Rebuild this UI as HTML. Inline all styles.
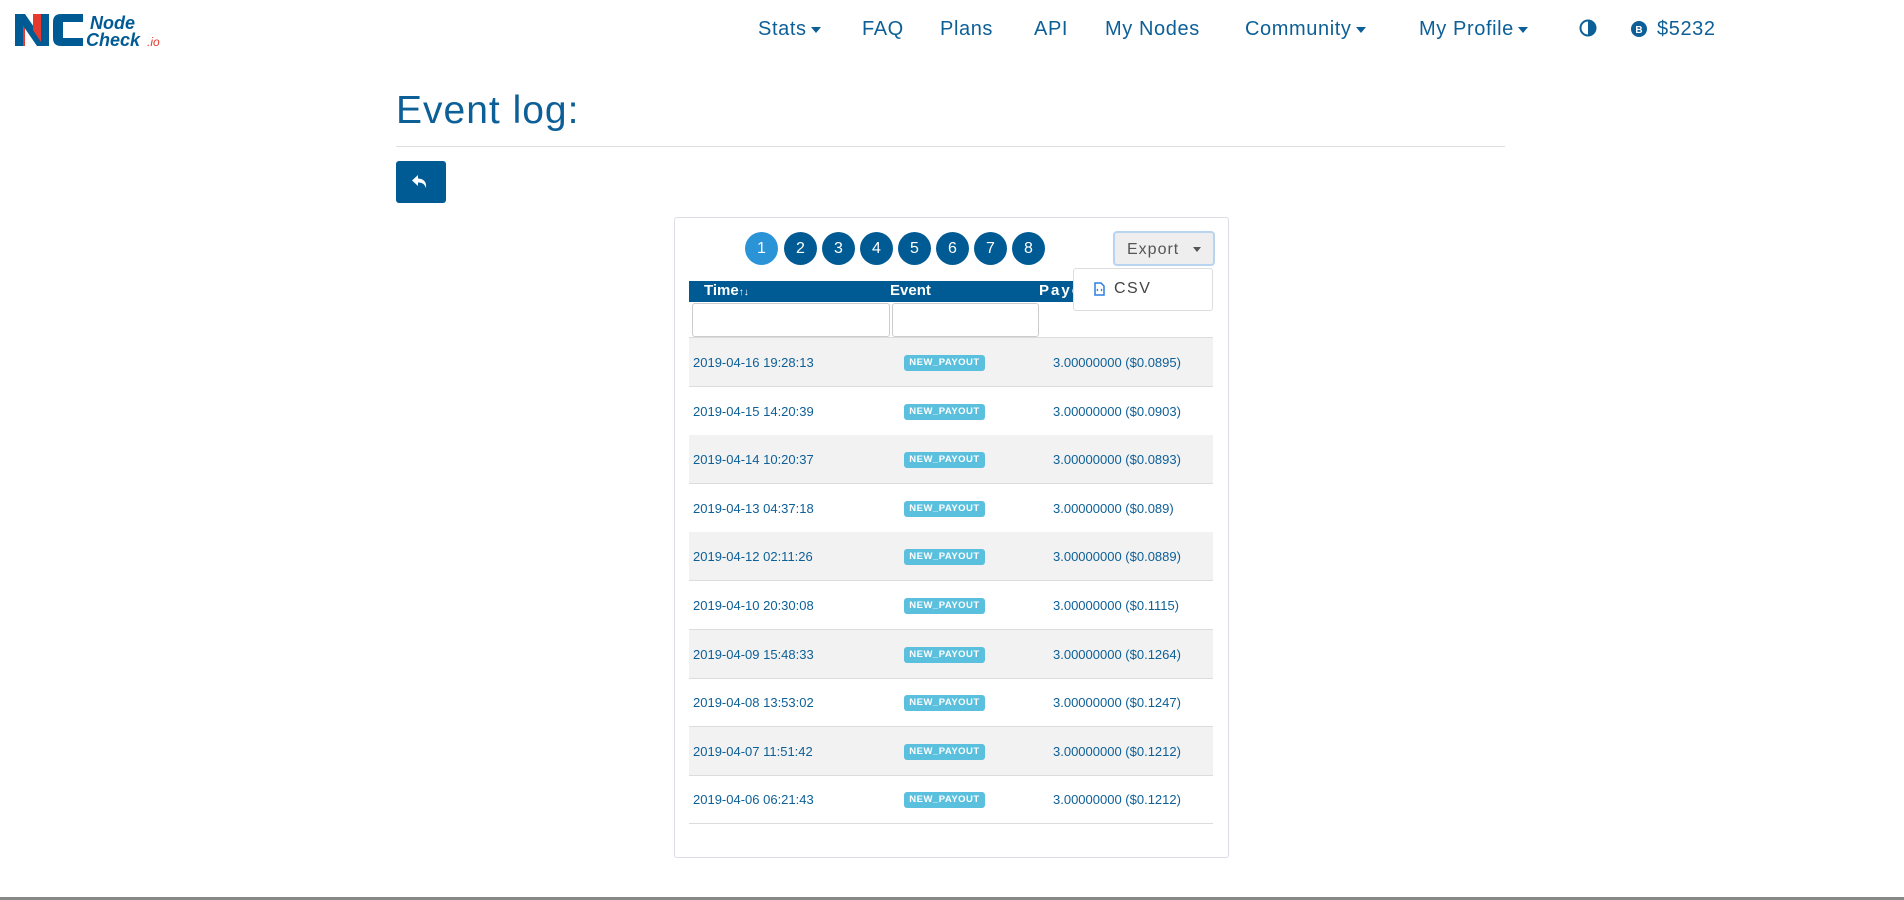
<!DOCTYPE html>
<html><head><meta charset="utf-8"><style>
*{box-sizing:border-box;margin:0;padding:0}
body{width:1904px;height:900px;background:#fff;font-family:"Liberation Sans",sans-serif;position:relative;overflow:hidden;color:#005b94}
.a{position:absolute;white-space:nowrap}
.nav{top:18px;font-size:20px;color:#0d5f97;letter-spacing:0.6px}
.car{display:inline-block;width:0;height:0;border-left:5px solid transparent;border-right:5px solid transparent;border-top:6px solid #0d5f97;vertical-align:middle;margin-left:4px}
.pg{top:232px;width:33px;height:33px;border-radius:50%;background:#005b94;color:#fff;font-size:16px;text-align:center;line-height:33px}
.row{left:689px;width:524px;height:49px;border-bottom:1px solid #dcdcdc;font-size:13px;color:#0d5f97}
.row span{position:absolute;top:17px}
.badge{position:absolute;left:215px;top:17px;width:81px;height:16px;background:#5bc0de;color:#fff;font-size:9.5px;font-weight:bold;border-radius:3px;text-align:center;line-height:16px;letter-spacing:.5px}
</style></head><body>
<svg class="a" style="left:13px;top:12px" width="154" height="36" viewBox="0 0 154 36">
<polygon points="2,2 12,2 12,34 2,34" fill="#e63a2e"/>
<polygon points="2,2 12,2 34,34 24,34" fill="#005b94"/>
<rect x="2" y="2" width="8" height="32" fill="#005b94"/>
<polygon points="20,2 28,2 28,30 20,18" fill="#e63a2e"/>
<path d="M70 2 H48 Q40 2 40 10 V26 Q40 34 48 34 H70 V26 H50 V10 H70 Z" fill="#005b94"/>
<path d="M28 2 H36 V34 H28 Z" fill="#005b94"/>
<text x="77" y="17" font-family="Liberation Sans" font-style="italic" font-weight="bold" font-size="18" fill="#005b94">Node</text>
<text x="73" y="34" font-family="Liberation Sans" font-style="italic" font-weight="bold" font-size="18" fill="#005b94">Check</text>
<text x="134" y="34" font-family="Liberation Sans" font-style="italic" font-size="12" fill="#e63a2e">.io</text>
</svg>
<div class="a nav" style="left:758px">Stats<span class="car"></span></div>
<div class="a nav" style="left:862px">FAQ</div>
<div class="a nav" style="left:940px">Plans</div>
<div class="a nav" style="left:1034px">API</div>
<div class="a nav" style="left:1105px">My Nodes</div>
<div class="a nav" style="left:1245px">Community<span class="car"></span></div>
<div class="a nav" style="left:1419px">My Profile<span class="car"></span></div>
<svg class="a" style="left:1579px;top:19px" width="18" height="18" viewBox="0 0 18 18"><circle cx="9" cy="9" r="7.5" fill="none" stroke="#0d5f97" stroke-width="2"/><path d="M9 1.5 A7.5 7.5 0 0 1 9 16.5Z" fill="#0d5f97"/></svg>
<svg class="a" style="left:1631px;top:21px" width="16" height="16" viewBox="0 0 16 16"><circle cx="8" cy="8" r="8" fill="#0d5f97"/><text x="8" y="12" text-anchor="middle" font-size="10" font-weight="bold" fill="#fff" font-family="Liberation Sans">B</text></svg>
<div class="a nav" style="left:1657px">$5232</div>

<div class="a" style="left:396px;top:89px;font-size:39px;color:#0d5f97;letter-spacing:1px">Event log:</div>
<div class="a" style="left:396px;top:146px;width:1109px;height:1px;background:#e0e0e0"></div>
<div class="a" style="left:396px;top:161px;width:50px;height:42px;background:#005b94;border-radius:3px">
<svg style="position:absolute;left:15px;top:13px" width="20" height="16" viewBox="0 0 20 16"><path d="M7 1 L1 6.5 L7 12 V8.5 Q13 8 15 14 Q16 5 7 4.5 Z" fill="#fff"/></svg></div>

<div class="a" style="left:674px;top:217px;width:555px;height:641px;border:1px solid #dcdce4;border-radius:3px"></div>
<div class="a pg" style="left:745px;background:#2a94d6">1</div>
<div class="a pg" style="left:784px">2</div>
<div class="a pg" style="left:822px">3</div>
<div class="a pg" style="left:860px">4</div>
<div class="a pg" style="left:898px">5</div>
<div class="a pg" style="left:936px">6</div>
<div class="a pg" style="left:974px">7</div>
<div class="a pg" style="left:1012px">8</div>
<div class="a" style="left:1113px;top:231px;width:102px;height:35px;background:#eee;border:2px solid #b8d4f0;border-radius:4px;font-size:16px;color:#555;letter-spacing:1px;padding:8px 0 0 12px">Export <span style="display:inline-block;margin-left:8px;border-left:4px solid transparent;border-right:4px solid transparent;border-top:5px solid #555;vertical-align:middle"></span></div>

<div class="a" style="left:689px;top:281px;width:524px;height:21px;background:#005b94;color:#fff;font-weight:bold;font-size:15px">
<span class="a" style="left:15px;top:1px">Time<span style="font-size:10px">↑&#8595;</span></span>
<span class="a" style="left:201px;top:1px">Event</span>
<span class="a" style="left:350px;top:1px;letter-spacing:2px">Payout</span></div>
<div class="a" style="left:692px;top:303px;width:198px;height:34px;border:1px solid #ccc;border-radius:3px"></div>
<div class="a" style="left:892px;top:303px;width:147px;height:34px;border:1px solid #ccc;border-radius:3px"></div>
<div class="a" style="left:689px;top:337px;width:524px;height:1px;background:#dcdcdc"></div>

<div class="a" style="left:1073px;top:268px;width:140px;height:43px;background:#fff;border:1px solid #ddd;border-radius:3px;font-size:16px;color:#444;letter-spacing:1.5px">
<svg class="a" style="left:20px;top:13px" width="11" height="14" viewBox="0 0 11 14"><path d="M1 1H7L10 4V13H1Z" fill="none" stroke="#2a7fe0" stroke-width="1.5"/><path d="M4 9 L3 8 L4 7 M7 7 L8 8 L7 9" stroke="#2a7fe0" fill="none"/></svg>
<span class="a" style="left:40px;top:11px">CSV</span></div>

<div class="a row" style="top:338px;background:#f2f2f2"><span style="left:4px">2019-04-16 19:28:13</span><div class="badge">NEW_PAYOUT</div><span style="left:364px">3.00000000 ($0.0895)</span></div>
<div class="a row" style="top:387px"><span style="left:4px">2019-04-15 14:20:39</span><div class="badge">NEW_PAYOUT</div><span style="left:364px">3.00000000 ($0.0903)</span></div>
<div class="a row" style="top:435px;background:#f2f2f2"><span style="left:4px">2019-04-14 10:20:37</span><div class="badge">NEW_PAYOUT</div><span style="left:364px">3.00000000 ($0.0893)</span></div>
<div class="a row" style="top:484px"><span style="left:4px">2019-04-13 04:37:18</span><div class="badge">NEW_PAYOUT</div><span style="left:364px">3.00000000 ($0.089)</span></div>
<div class="a row" style="top:532px;background:#f2f2f2"><span style="left:4px">2019-04-12 02:11:26</span><div class="badge">NEW_PAYOUT</div><span style="left:364px">3.00000000 ($0.0889)</span></div>
<div class="a row" style="top:581px"><span style="left:4px">2019-04-10 20:30:08</span><div class="badge">NEW_PAYOUT</div><span style="left:364px">3.00000000 ($0.1115)</span></div>
<div class="a row" style="top:630px;background:#f2f2f2"><span style="left:4px">2019-04-09 15:48:33</span><div class="badge">NEW_PAYOUT</div><span style="left:364px">3.00000000 ($0.1264)</span></div>
<div class="a row" style="top:678px"><span style="left:4px">2019-04-08 13:53:02</span><div class="badge">NEW_PAYOUT</div><span style="left:364px">3.00000000 ($0.1247)</span></div>
<div class="a row" style="top:727px;background:#f2f2f2"><span style="left:4px">2019-04-07 11:51:42</span><div class="badge">NEW_PAYOUT</div><span style="left:364px">3.00000000 ($0.1212)</span></div>
<div class="a row" style="top:775px"><span style="left:4px">2019-04-06 06:21:43</span><div class="badge">NEW_PAYOUT</div><span style="left:364px">3.00000000 ($0.1212)</span></div>

<div class="a" style="left:0;top:897px;width:1904px;height:3px;background:#888"></div>
</body></html>
